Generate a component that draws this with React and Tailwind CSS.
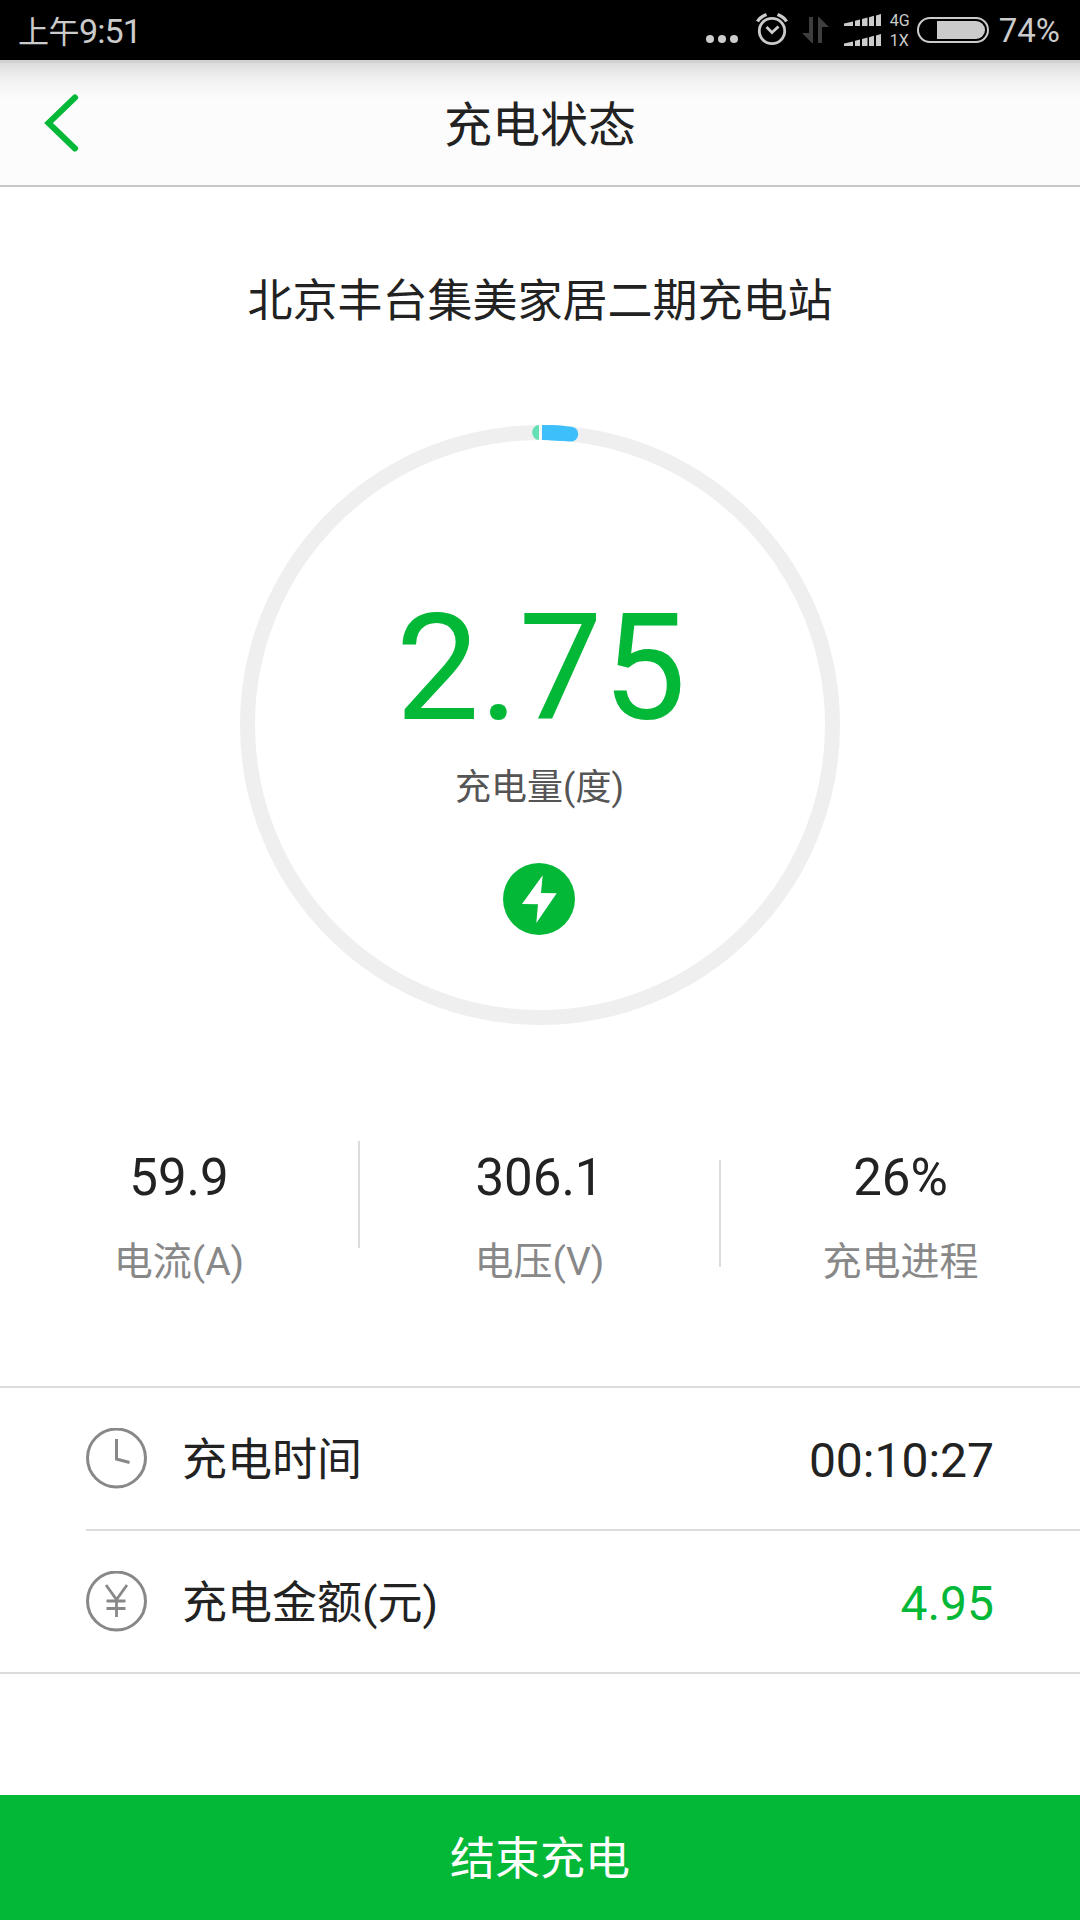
const GREEN = '#03b737';

function Signal({ className }) {
  return (
    <svg className={className} width="38" height="12" viewBox="0 0 38 12" fill="#cbcbcb">
      <path d="M0 12V9.600L9 7.500V12Z" />
      <path d="M11 12V6.800L16 5.600V12Z" />
      <path d="M18 12V5L23.500 3.600V12Z" />
      <path d="M25 12V3.200L30 1.700V12Z" />
      <path d="M32 12V1.600L37 0V12Z" />
    </svg>
  );
}

function StatusBar() {
  return (
    <div className="flex h-[60px] bg-black text-[#cbcbcb]">
      <div className="ml-[18px] mt-[1px] text-[31px] leading-[60px] tracking-[-0.5px] whitespace-nowrap">
        上午<span className="text-[34px] tracking-[-0.9px]">9:51</span>
      </div>
      <div className="ml-auto flex h-[60px]">
        <svg width="33" height="60" viewBox="0 0 33 60" fill="#cbcbcb">
          <circle cx="4" cy="39" r="4" />
          <circle cx="16" cy="39" r="4" />
          <circle cx="28" cy="39" r="4" />
        </svg>
        <svg className="ml-[17px]" width="34" height="60" viewBox="0 0 34 60" fill="none" stroke="#cbcbcb">
          <circle cx="16" cy="31" r="12.700" strokeWidth="2.800" />
          <path d="M10.500 27L16 32.500L22.500 26.500" strokeWidth="2.800" />
          <path d="M1.500 21.500Q4 17 10.500 14.500M30.500 21.500Q28 17 21.500 14.500" strokeWidth="3.400" />
        </svg>
        <svg className="ml-[12px]" width="28" height="60" viewBox="0 0 28 60" fill="#3e3e3e">
          <path d="M7 17H11V43H10L0 33H7Z" />
          <path d="M16 17H17L27 27H20V43H16Z" />
        </svg>
        <div className="ml-[14px] flex flex-col pt-[14px]">
          <Signal />
          <Signal className="mt-[8px]" />
        </div>
        <div className="ml-[8px] w-[27px] pt-[11px] text-[16px] leading-[20px] whitespace-nowrap">
          <div>4G</div>
          <div>1X</div>
        </div>
        <div className="mt-[17px] h-[26px] w-[72px] rounded-full border-2 border-[#cbcbcb] p-[2px]">
          <div className="ml-[16px] h-[18px] w-[48px] rounded-r-full bg-[#cbcbcb]" />
        </div>
        <div className="ml-[10px] mr-[20px] mt-[1px] text-[33px] leading-[60px] whitespace-nowrap">74%</div>
      </div>
    </div>
  );
}

function Header() {
  return (
    <div className="grid h-[127px] grid-cols-[1fr_auto_1fr] border-b-2 border-[#c8c8c8] bg-[#fcfcfc] bg-[linear-gradient(#d0d0d0_0px,#d0d0d0_3px,#dcdcdc_3px,#e9e9e9_12px,#f5f5f5_25px,#fcfcfc_40px)]">
      <svg className="mt-[33px] ml-[42px]" width="40" height="60" viewBox="0 0 40 60" fill="none" stroke={GREEN} strokeWidth="6" strokeLinecap="round">
        <path d="M33 4.500L6.500 30L33 55.500" />
      </svg>
      <h1 className="pt-[2px] text-[48px] leading-[127px]">充电状态</h1>
    </div>
  );
}

function Gauge() {
  return (
    <div className="mx-auto mt-[78px] grid h-[600px] w-[600px] justify-items-center">
      <svg className="col-start-1 row-start-1" width="600" height="600" viewBox="0 0 600 600" fill="none" strokeWidth="15">
        <circle cx="300" cy="300" r="292.500" stroke="#efefef" />
        <path d="M299 0A6.800 7.500 0 0 0 299 15Z" fill="#65e0b4" stroke="none" />
        <path d="M299 0H302V15H299Z" fill="#f8f8f8" stroke="none" />
        <path d="M302 7.500A292.500 292.500 0 0 1 325 8.500" stroke="#3dbffb" />
        <path d="M310 7.700A292.500 292.500 0 0 1 330.700 9.100" stroke="#3dbffb" strokeLinecap="round" />
      </svg>
      <div className="col-start-1 row-start-1 flex flex-col items-center">
        <div className="mt-[153px] ml-[2px] text-[149px] leading-[180px] text-[#03b737]">2.75</div>
        <div className="mt-[5px] mr-[1px] text-[36px] leading-[50px] text-[#555]">充电量(度)</div>
        <svg className="mt-[50px] mr-[2px]" width="72" height="72" viewBox="0 0 72 72">
          <circle cx="36" cy="36" r="36" fill={GREEN} />
          <path d="M39.700 12.300L38 30L53.700 30.300L33.300 60L35 41.300L19 41Z" fill="#fff" />
        </svg>
      </div>
    </div>
  );
}

function Stat({ value, label }) {
  return (
    <div className="flex flex-col items-center">
      <div className="text-[51px] leading-[60px] text-[#222]">{value}</div>
      <div className="mt-[29px] text-[39px] leading-[50px] text-[#888]">{label}</div>
    </div>
  );
}

function Row({ icon, label, value, valueClass }) {
  return (
    <div className="flex h-[141px] items-center">
      {icon}
      <div className="ml-[35px] mt-[4px] text-[45px] leading-[60px]">{label}</div>
      <div className={'ml-auto mt-[5px] mr-[86px] text-[48px] leading-[60px] ' + valueClass}>{value}</div>
    </div>
  );
}

const clockIcon = (
  <svg width="61" height="61" viewBox="0 0 61 61" fill="none" stroke="#888" strokeWidth="3">
    <circle cx="30.500" cy="30" r="29" />
    <path d="M30.500 11V31L43.500 34.500" />
  </svg>
);

const yenIcon = (
  <svg width="61" height="61" viewBox="0 0 61 61" fill="none" stroke="#888" strokeWidth="3">
    <circle cx="30.500" cy="30" r="29" />
    <path d="M20 14L30.500 28.500L41 14M30.500 27.500V46M20.500 30H39.500M20.500 37.500H39.500" strokeWidth="2.800" />
  </svg>
);

export default function App() {
  return (
    <div lang="zh-CN" className="flex h-[1920px] w-[1080px] flex-col overflow-hidden bg-white font-['Roboto','Noto_Sans_CJK_SC',sans-serif] text-[#222]">
      <StatusBar />
      <Header />
      <h2 className="mt-[70px] text-center text-[45px] leading-[90px]">北京丰台集美家居二期充电站</h2>
      <Gauge />
      <div className="mt-[116px] grid h-[245px] grid-cols-[358px_2px_359px_2px_359px]">
        <div className="pt-[7px]"><Stat value="59.9" label="电流(A)" /></div>
        <div className="h-[107px] bg-[#dcdcdc]" />
        <div className="pt-[7px]"><Stat value="306.1" label="电压(V)" /></div>
        <div className="mt-[19px] h-[107px] bg-[#dcdcdc]" />
        <div className="pt-[7px]"><Stat value="26%" label="充电进程" /></div>
      </div>
      <div className="border-y-2 border-[#dcdcdc] pl-[86px]">
        <Row icon={clockIcon} label="充电时间" value="00:10:27" valueClass="text-[#222]" />
        <div className="h-[2px] bg-[#dcdcdc]" />
        <Row icon={yenIcon} label="充电金额(元)" value="4.95" valueClass="text-[#03b737]" />
      </div>
      <button className="mt-auto h-[125px] bg-[#03b737] pt-[4px] text-[45px] leading-[121px] text-white">结束充电</button>
    </div>
  );
}
